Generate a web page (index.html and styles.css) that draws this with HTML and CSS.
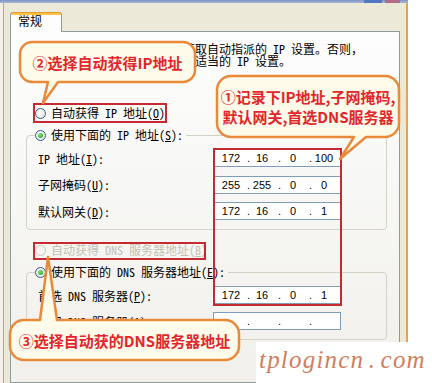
FILE: index.html
```html
<!DOCTYPE html>
<html lang="zh-CN">
<head>
<meta charset="utf-8">
<title>Internet 协议 (TCP/IP) 属性</title>
<link rel="stylesheet" href="styles.css">
</head>
<body>
<div class="page">
  <div class="window">
    <div class="titlebar"><span class="tb-btn tb-max"></span><span class="tb-btn tb-close"></span></div>
    <div class="client">
      <div class="tabs"><div class="tab">常规</div></div>
      <div class="panel">
        <p class="desc">如果网络支持此功能，则可以获取自动指派的 IP 设置。否则，<br>您需要从网络系统管理员处获得适当的 IP 设置。</p>
        <div class="radio-row opt"><span class="radio"></span><span>自动获得 IP 地址(<u>O</u>)</span></div>
        <fieldset class="group">
          <legend class="radio-row"><span class="radio checked"></span><span>使用下面的 IP 地址(<u>S</u>):</span></legend>
          <div class="field-row"><span class="label">IP 地址(<u>I</u>):</span><div class="ip"><span class="seg">172</span><span class="dot">.</span><span class="seg">16</span><span class="dot">.</span><span class="seg">0</span><span class="dot">.</span><span class="seg">100</span></div></div>
          <div class="field-row"><span class="label">子网掩码(<u>U</u>):</span><div class="ip"><span class="seg">255</span><span class="dot">.</span><span class="seg">255</span><span class="dot">.</span><span class="seg">0</span><span class="dot">.</span><span class="seg">0</span></div></div>
          <div class="field-row"><span class="label">默认网关(<u>D</u>):</span><div class="ip"><span class="seg">172</span><span class="dot">.</span><span class="seg">16</span><span class="dot">.</span><span class="seg">0</span><span class="dot">.</span><span class="seg">1</span></div></div>
        </fieldset>
        <div class="radio-row opt dns disabled"><span class="radio"></span><span>自动获得 DNS 服务器地址(<u>B</u>)</span></div>
        <fieldset class="group dns-group">
          <legend class="radio-row"><span class="radio checked"></span><span>使用下面的 DNS 服务器地址(<u>E</u>):</span></legend>
          <div class="field-row"><span class="label">首选 DNS 服务器(<u>P</u>):</span><div class="ip"><span class="seg">172</span><span class="dot">.</span><span class="seg">16</span><span class="dot">.</span><span class="seg">0</span><span class="dot">.</span><span class="seg">1</span></div></div>
          <div class="field-row"><span class="label">备用 DNS 服务器(<u>A</u>):</span><div class="ip"><span class="seg"></span><span class="dot">.</span><span class="seg"></span><span class="dot">.</span><span class="seg"></span><span class="dot">.</span><span class="seg"></span></div></div>
        </fieldset>
      </div>
    </div>
  </div>

  <div class="redbox rb-ip-auto"></div>
  <div class="redbox rb-dns-auto"></div>
  <div class="redbox rb-values"></div>

  <svg class="bubbles" width="432" height="383" viewBox="0 0 432 383">
    <path d="M32 42 H183 A12 12 0 0 1 195 54 V70 A12 12 0 0 1 183 82 H58 L43 103 L48 82 H32 A12 12 0 0 1 20 70 V54 A12 12 0 0 1 32 42 Z"/>
    <path d="M231 76 H385 A14 14 0 0 1 399 90 V123 A14 14 0 0 1 385 137 H366 L340 159 L354 137 H231 A14 14 0 0 1 217 123 V90 A14 14 0 0 1 231 76 Z"/>
    <path d="M24 320 H40 L48 257 L57 320 H225 A14 14 0 0 1 239 334 V346 A14 14 0 0 1 225 360 H24 A14 14 0 0 1 10 346 V334 A14 14 0 0 1 24 320 Z"/>
  </svg>
  <div class="bt bt1"><span>②选择自动获得IP地址</span></div>
  <div class="bt bt2"><span>①记录下IP地址,子网掩码,<br>默认网关,首选DNS服务器</span></div>
  <div class="bt bt3"><span>③选择自动获的DNS服务器地址</span></div>

  <div class="watermark">tplogincn . com</div>
</div>
</body>
</html>
```

FILE: styles.css
```css
* { box-sizing: border-box; }
html, body { margin: 0; }
body { width: 432px; height: 383px; overflow: hidden; background: #fff; }

.page {
  position: relative;
  width: 432px;
  height: 383px;
  overflow: hidden;
  font-family: "Noto Sans Mono CJK SC", "Noto Sans CJK SC", monospace;
  font-size: 12px;
  color: #000;
}

.window {
  width: 408px;
  height: 383px;
  display: flex;
  flex-direction: column;
  background: #f4f0e7;
}
.titlebar {
  height: 3px;
  flex: none;
  background: linear-gradient(#7f94c4, #a7b5d8);
  display: flex;
  justify-content: flex-end;
  gap: 3px;
  padding-right: 8px;
}
.tb-btn { height: 3px; }
.tb-max { width: 18px; background: #5077bf; }
.tb-close { width: 15px; background: #b06c8a; }

.client {
  flex: 1;
  min-height: 0;
  margin-left: 3px;
  border-left: 1px solid #e3a155;
  border-right: 2px solid #e8a24e;
  background: #ece9d8;
  padding: 9px 6px 0;
  display: flex;
  flex-direction: column;
}
.tabs {
  display: flex;
  height: 19px;
  flex: none;
  position: relative;
  z-index: 1;
}
.tab {
  width: 52px;
  height: 20px;
  border-left: 1px solid #919b9c;
  border-right: 1px solid #919b9c;
  border-radius: 3px 3px 0 0;
  background: linear-gradient(#e4983a 0, #e4983a 1px, #ffc53f 1px, #ffc53f 3px, #fdfdfd 3px, #fdfdfd 100%);
  padding: 1px 0 0 7px;
  line-height: 16px;
}
.panel {
  flex: 1;
  border: 1px solid #919b9c;
  background: linear-gradient(#fdfdfd, #f1f0eb);
}

.desc {
  margin: 11px 0 0 16px;
  line-height: 12px;
  white-space: nowrap;
}

.radio-row {
  display: flex;
  align-items: center;
  gap: 5px;
  height: 16px;
  line-height: 16px;
  white-space: nowrap;
}
.opt { margin: 38px 0 0 24px; }
.opt.dns { margin-top: 12px; }

.radio {
  position: relative;
  flex: none;
  width: 11px;
  height: 11px;
  border-radius: 50%;
  border: 1px solid #2c5b8e;
  background: radial-gradient(circle at 40% 40%, #fff, #e0dfd8);
}
.radio.checked::after {
  content: "";
  position: absolute;
  left: 2px;
  top: 2px;
  width: 5px;
  height: 5px;
  border-radius: 50%;
  background: radial-gradient(circle at 35% 35%, #7ee07e, #1f9d1f);
}
.disabled { color: #c4c1b4; }
.disabled .radio { border-color: #cbc9bd; background: #f6f5f0; }

.group {
  margin: 6px 12px 0 15px;
  padding: 6px 0 9px 8px;
  border: 1px solid #d3d2c6;
  border-radius: 4px;
  min-width: 0;
}
.group legend {
  padding: 0 3px 0 0;
  margin: 0;
}

.field-row {
  display: flex;
  align-items: center;
  height: 18px;
}
.field-row + .field-row { margin-top: 8.5px; }
.dns-group .field-row + .field-row { margin-top: 8px; }

.label {
  flex: none;
  width: 178px;
  padding-left: 3px;
  white-space: nowrap;
}
.ip {
  flex: none;
  width: 128px;
  height: 18px;
  border: 1px solid #7f9db9;
  background: #fff;
  display: flex;
  padding-left: 5px;
  font-family: "Liberation Sans", Arial, sans-serif;
  font-size: 11px;
  line-height: 16px;
  color: #000;
}
.seg { width: 24px; text-align: center; }
.dot { width: 7px; text-align: right; }

.redbox {
  position: absolute;
  border: 2px solid #c62a31;
}
.rb-ip-auto { left: 33px; top: 103px; width: 134px; height: 20px; }
.rb-dns-auto { left: 33px; top: 242px; width: 173px; height: 18px; }
.rb-values { left: 213px; top: 148px; width: 129px; height: 158px; }

.bubbles {
  position: absolute;
  left: 0;
  top: 0;
  pointer-events: none;
}
.bubbles path {
  fill: #fffbea;
  stroke: #e98a3b;
  stroke-width: 2.5;
  stroke-linejoin: round;
}

.bt {
  position: absolute;
  display: flex;
  align-items: center;
  justify-content: center;
  font-family: "Noto Sans CJK SC", sans-serif;
  font-weight: 700;
  font-size: 15px;
  color: #e2262b;
  white-space: nowrap;
  text-align: center;
}
.bt1 { left: 20px; top: 42px; width: 175px; height: 40px; }
.bt2 { left: 217px; top: 76px; width: 182px; height: 61px; line-height: 20px; }
.bt3 { left: 10px; top: 320px; width: 229px; height: 40px; }

.watermark {
  position: absolute;
  left: 256px;
  top: 342px;
  width: 176px;
  height: 41px;
  background: #fff;
  padding: 3px 0 0 3px;
  font-family: "Liberation Serif", serif;
  font-style: italic;
  font-size: 25px;
  line-height: 29px;
  letter-spacing: 1.2px;
  word-spacing: -3px;
  color: #cf7e5c;
  white-space: nowrap;
  overflow: hidden;
}
```
